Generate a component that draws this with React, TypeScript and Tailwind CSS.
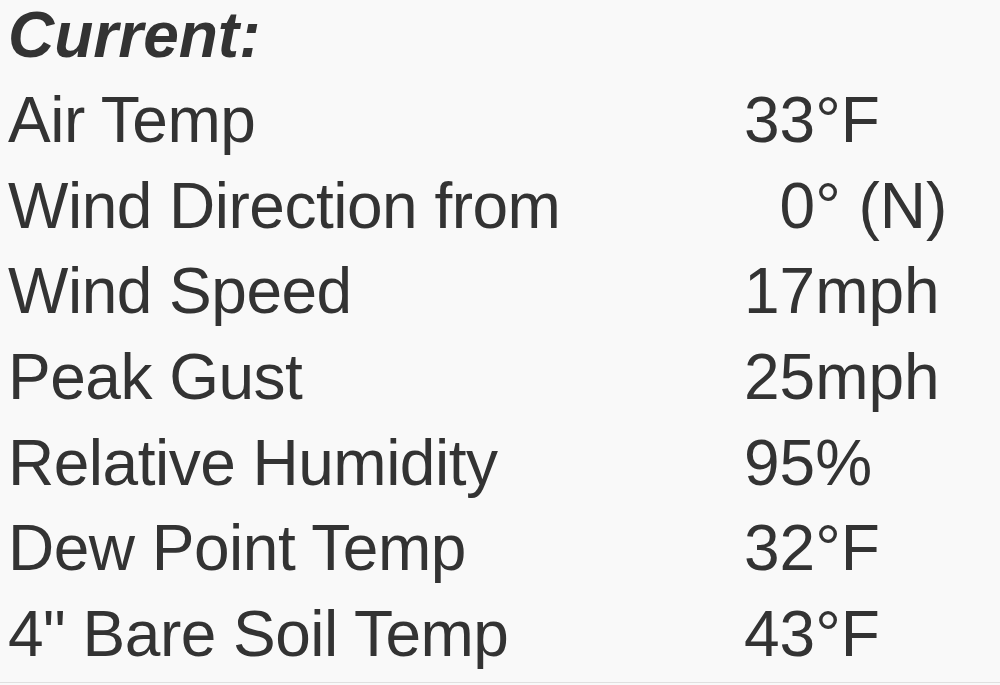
const rows: [string, string][] = [
  ['Air Temp', '33°F'],
  ['Wind Direction from', '\u00a0\u00a00° (N)'],
  ['Wind Speed', '17mph'],
  ['Peak Gust', '25mph'],
  ['Relative Humidity', '95%'],
  ['Dew Point Temp', '32°F'],
  ['4" Bare Soil Temp', '43°F'],
];

export default function App() {
  return (
    <div className="h-[685px] overflow-hidden bg-[#f9f9f9] font-['Liberation_Sans',Arial,sans-serif] text-[64px] leading-[85.67px] text-[#333]">
      <div className="border-b border-[#e0e0e0] pb-[4px] pl-2">
        <div className="mb-[8px] font-bold italic leading-[70px]">Current:</div>
        {rows.map(([label, value]) => (
          <div key={label} className="grid grid-cols-[736px_1fr] whitespace-nowrap">
            <span className="tracking-[-0.5px]">{label}</span>
            <span>{value}</span>
          </div>
        ))}
      </div>
    </div>
  );
}
